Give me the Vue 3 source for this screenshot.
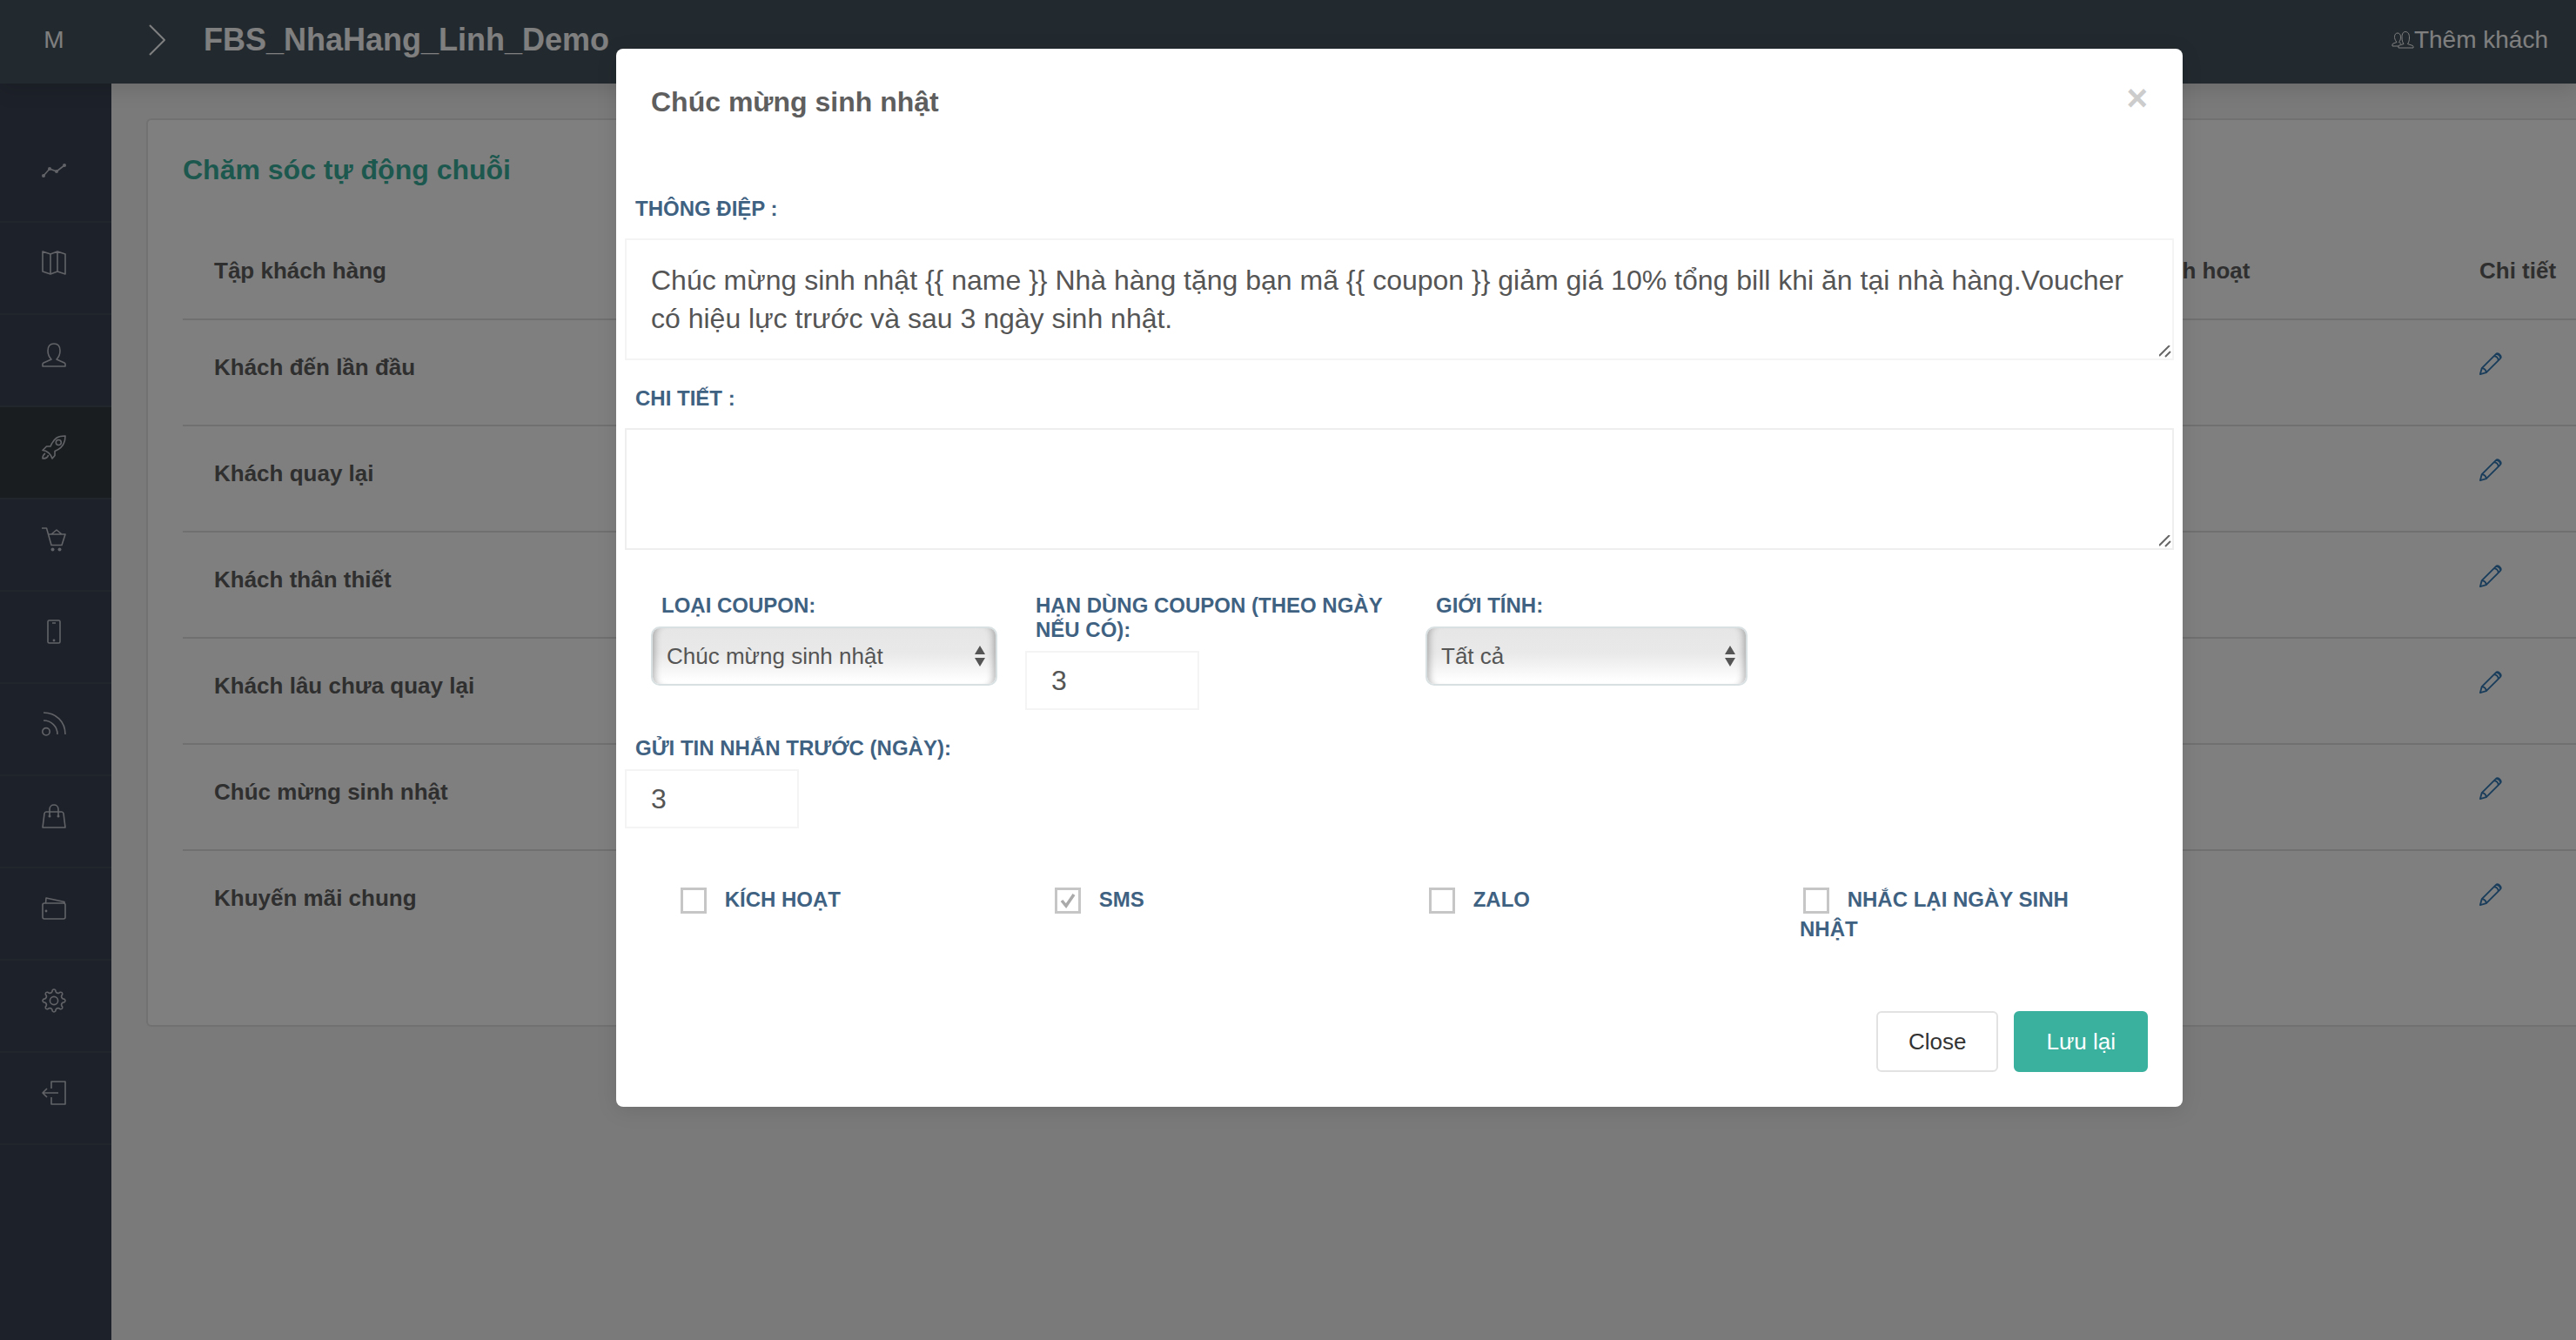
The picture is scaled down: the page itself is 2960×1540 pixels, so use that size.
<script setup>
import { ref } from 'vue'

const gearPath = (() => {
  const point = (radius, degrees) => {
    const a = (degrees * Math.PI) / 180
    return `${(14 + radius * Math.cos(a)).toFixed(2)} ${(14 + radius * Math.sin(a)).toFixed(2)}`
  }
  let d = ''
  for (let i = 0; i < 8; i++) {
    const a = i * 45
    d += `${i ? 'L' : 'M'}${point(12, a - 9)} Q${point(14.2, a)} ${point(12, a + 9)} L${point(10.6, a + 11)} Q${point(8.6, a + 22.5)} ${point(10.6, a + 34)} `
  }
  return d + 'Z'
})()

const navItems = [
  { name: 'Thống kê', d: 'M2 20 9 12 17 15 26 8', dots: [[2, 20], [9, 12], [17, 15], [26, 8]] },
  { name: 'Bản đồ', d: 'M1 1 10 4 18 1 27 4V27L18 24 10 27 1 24ZM10 4V27M18 1V24' },
  { name: 'Khách hàng', d: 'M1 27V24.5Q1 23.5 2 23L11 19C8 16 7 13 7 9C7 4 9.5 1 14 1C18.5 1 21 4 21 9C21 13 20 16 17 19L26 23Q27 23.5 27 24.5V27Z' },
  { name: 'Chăm sóc', active: true, d: 'M27 1C19 1 14 3 10 13H5.5L1 17.5C6 17.5 10.5 22 12 27L15 23.5V18.5C24 15 27 9 27 1ZM22.3 8.5A3 3 0 1 1 16.3 8.5A3 3 0 1 1 22.3 8.5M4 21C1.5 22.5 1 24 1 27C4.5 27 7 26 7.5 23' },
  { name: 'Giỏ hàng', d: 'M0 1H5.5L11 20.5H23L27 8H8M11 8L17 3 23 8', dots: [[12.5, 25.5], [20.5, 25.5]] },
  { name: 'Di động', d: 'M8.500 1H19.5Q21 1 21 2.500V25.5Q21 27 19.5 27H8.500Q7 27 7 25.5V2.500Q7 1 8.500 1ZM12 4H16', dots: [[14, 24]], dotSize: 1.4 },
  { name: 'Tin tức', d: 'M2 1C16 1 27 11 27 26M2 10C11 10 18 17 18 26M9.200 22.800A4.200 4.200 0 1 1 .8 22.800A4.200 4.200 0 1 1 9.200 22.800' },
  { name: 'Cửa hàng', d: 'M3 11Q3.500 9 5 9H23Q24.500 9 25 11L27 27H1ZM9 14V6C9-.7 19-.7 19 6V14', dots: [[9, 14], [19, 14]], dotSize: 1.5 },
  { name: 'Ví', d: 'M3 8H25Q27 8 27 10V24Q27 26 25 26H3Q1 26 1 24V10Q1 8 3 8ZM4.500 8 5 2 26 6.500V8', dots: [[5, 17]], dotSize: 1.4 },
  { name: 'Cài đặt', d: gearPath + 'M18.600 14A4.600 4.600 0 1 1 9.400 14A4.600 4.600 0 1 1 18.600 14' },
  { name: 'Đăng xuất', d: 'M11 9V1H27V27H11V19M19 14H1M6 9 1 14 6 19' },
]

const segments = [
  'Khách đến lần đầu',
  'Khách quay lại',
  'Khách thân thiết',
  'Khách lâu chưa quay lại',
  'Chúc mừng sinh nhật',
  'Khuyến mãi chung',
]

const message = ref(
  'Chúc mừng sinh nhật {{ name }} Nhà hàng tặng bạn mã {{ coupon }} giảm giá 10% tổng bill khi ăn tại nhà hàng.Voucher có hiệu lực trước và sau 3 ngày sinh nhật.'
)
const detail = ref('')
const couponType = ref('Chúc mừng sinh nhật')
const expiry = ref('3')
const gender = ref('Tất cả')
const sendBefore = ref('3')
const options = ref([
  { label: 'KÍCH HOẠT', checked: false },
  { label: 'SMS', checked: true },
  { label: 'ZALO', checked: false },
  { label: 'NHẮC LẠI NGÀY SINH NHẬT', checked: false },
])
</script>

<template>
  <div class="page">
    <header class="topbar">
      <span class="logo">M</span>
      <button class="toggle" type="button" aria-label="Mở menu">
        <svg width="20" height="36" viewBox="0 0 20 36"><path d="M1 1 18 18 1 35" /></svg>
      </button>
      <span class="brand">FBS_NhaHang_Linh_Demo</span>
      <a class="add-guest" href="#">
        <svg width="26" height="22" viewBox="0 0 26 22">
          <path d="M8 20V18Q8 17.500 9 17L14 15.500C12.500 13.500 12 11 12 8 12 3.500 13.500 1.500 16 1.500S20.500 3.500 20.500 8C20.500 11 20 13.500 18.500 15.500L24.500 17.500Q25 18 25 18.500V20ZM8 18H1V16Q1 15.500 2 15L6 13.500C4 11 3.500 9 3.500 7.500 3.500 4.500 5 3 7 3S10.500 4.500 10.500 7.500C10.500 10 10 12 8.500 13.500L11 15" />
        </svg>Thêm khách</a>
    </header>

    <div class="shell">
      <nav class="sidebar">
        <a
          v-for="item in navItems"
          :key="item.name"
          href="#"
          class="nav-item"
          :class="{ active: item.active }"
          :aria-label="item.name"
        >
          <svg width="28" height="28" viewBox="0 0 28 28">
            <path :d="item.d" />
            <circle v-for="(dot, i) in item.dots" :key="i" :cx="dot[0]" :cy="dot[1]" :r="item.dotSize || 2" />
          </svg>
        </a>
      </nav>

      <main class="content">
        <section class="card">
          <h1 class="card-title">Chăm sóc tự động chuỗi</h1>
          <table class="segments">
            <thead>
              <tr>
                <th>Tập khách hàng</th>
                <th class="col-active">Kích hoạt</th>
                <th class="col-detail">Chi tiết</th>
              </tr>
            </thead>
            <tbody>
              <tr v-for="segment in segments" :key="segment">
                <td>{{ segment }}</td>
                <td></td>
                <td>
                  <a class="edit" href="#" :aria-label="'Sửa ' + segment">
                    <svg width="26" height="26" viewBox="0 0 28 28">
                      <path d="M1 27 3 19.500 20 2.500Q22.500 0 25.200 2.800 28 5.500 25.500 8L8.500 25ZM3 19.500Q8 20 8.500 25M18 4.500Q23 5 23.500 10M21 2Q25.500 2.500 26 7" />
                    </svg>
                  </a>
                </td>
              </tr>
            </tbody>
          </table>
        </section>
      </main>
    </div>

    <div class="overlay">
      <form class="modal" role="dialog" aria-labelledby="modal-title" @submit.prevent>
        <div class="modal-header">
          <h2 id="modal-title">Chúc mừng sinh nhật</h2>
          <button class="dismiss" type="button" aria-label="Đóng">×</button>
        </div>

        <div class="modal-body">
          <div class="field">
            <label class="area-label" for="message">THÔNG ĐIỆP :</label>
            <textarea id="message" v-model="message" spellcheck="false"></textarea>
          </div>
          <div class="field">
            <label class="area-label" for="detail">CHI TIẾT :</label>
            <textarea id="detail" v-model="detail" class="plain"></textarea>
          </div>

          <div class="columns coupon-row">
            <div>
              <label for="coupon-type">LOẠI COUPON:</label>
              <select id="coupon-type" v-model="couponType" class="coupon-select">
                <option>Chúc mừng sinh nhật</option>
              </select>
            </div>
            <div>
              <label for="expiry">HẠN DÙNG COUPON (THEO NGÀY NẾU CÓ):</label>
              <input id="expiry" v-model="expiry" type="text" />
            </div>
            <div class="inset">
              <label for="gender">GIỚI TÍNH:</label>
              <select id="gender" v-model="gender">
                <option>Tất cả</option>
              </select>
            </div>
          </div>

          <div class="field">
            <label for="send-before">GỬI TIN NHẮN TRƯỚC (NGÀY):</label>
            <input id="send-before" v-model="sendBefore" type="text" />
          </div>

          <div class="columns option-row">
            <div v-for="option in options" :key="option.label" class="inset">
              <label class="check"><input v-model="option.checked" type="checkbox" /> {{ option.label }}</label>
            </div>
          </div>
        </div>

        <div class="modal-footer">
          <button class="btn" type="button">Close</button>
          <button class="btn primary" type="submit">Lưu lại</button>
        </div>
      </form>
    </div>
  </div>
</template>

<style>
body {
  margin: 0;
  background: #f4f4f4;
}
</style>

<style scoped>
.page,
.page * {
  box-sizing: border-box;
}

.page {
  position: relative;
  display: flex;
  flex-direction: column;
  min-height: 100vh;
  overflow: hidden;
  color: #5e5e5e;
  font-family: "Liberation Sans", Arial, sans-serif;
  font-size: 26px;
  line-height: 28px;
}

svg {
  display: block;
  fill: none;
  stroke: currentColor;
  stroke-width: 2;
  stroke-linejoin: round;
}

.page button,
.page input,
.page select,
.page textarea {
  margin: 0;
  font-family: inherit;
}

.topbar {
  position: relative;
  z-index: 1;
  display: flex;
  align-items: center;
  height: 96px;
  padding: 0 32px 4px 0;
  background: #46545f;
  box-shadow: 0 4px 24px rgba(0, 0, 0, 0.15);
  color: #fff;
}

.logo {
  width: 128px;
  padding-right: 4px;
  font-size: 28px;
  text-align: center;
}

.toggle {
  width: 106px;
  padding: 0 0 0 43px;
  border: 0;
  background: none;
  color: inherit;
}

.brand {
  font-size: 36px;
  font-weight: bold;
}

.add-guest {
  display: flex;
  align-items: center;
  margin-left: auto;
  color: inherit;
  font-size: 28px;
  text-decoration: none;
}

.add-guest svg {
  stroke-width: 1;
}

.shell {
  display: flex;
  flex: 1;
}

.sidebar {
  width: 128px;
  padding-top: 54px;
  background: #3a4252;
}

.nav-item {
  display: flex;
  height: 106px;
  padding: 32px 48px;
  border-bottom: 2px solid #424b58;
  color: #c3c7d0;
}

.nav-item svg {
  overflow: visible;
  stroke-width: 1.6;
}

.nav-item.active {
  background: #343a3f;
}

.nav-item circle {
  fill: currentColor;
  stroke: none;
}

.content {
  flex: 1;
  padding: 40px 0 0 40px;
}

.card {
  padding: 38px 0 78px 40px;
  border: 2px solid #e2e2e2;
  border-right: 0;
  border-radius: 6px 0 0 6px;
  background: #fff;
}

.card-title {
  margin: 0;
  color: #3ab09e;
  font-size: 32px;
  line-height: 38px;
}

.segments {
  width: 100%;
  margin-top: 83px;
  border-collapse: separate;
  border-spacing: 0;
  table-layout: fixed;
}

.segments th,
.segments td {
  border-bottom: 2px solid #e0e0e0;
  font-weight: bold;
  text-align: left;
  vertical-align: top;
}

.segments th {
  padding: 0 0 41px 36px;
}

.segments td {
  height: 122px;
  padding: 40px 0 0 36px;
}

.segments tr:last-child td {
  border-bottom-color: transparent;
}

.segments thead th {
  border-bottom-color: #e0e0e0;
}

.col-active {
  width: 382px;
}

.col-detail {
  width: 147px;
}

.edit {
  display: block;
  margin-top: -3px;
  color: #337ab7;
}

.overlay {
  position: absolute;
  inset: 0;
  z-index: 2;
  padding: 56px 452px 0 708px;
  background: rgba(0, 0, 0, 0.5);
}

.modal {
  border-radius: 8px;
  background: #fff;
  box-shadow: 0 4px 24px rgba(0, 0, 0, 0.1);
}

.modal-header {
  display: flex;
  justify-content: space-between;
  align-items: flex-start;
  padding: 40px;
}

.modal-header h2 {
  margin: 0;
  font-size: 32px;
  line-height: 42px;
}

.dismiss {
  padding: 0;
  border: 0;
  background: none;
  color: #ccc;
  font-size: 42px;
  font-weight: bold;
  line-height: 34px;
}

.modal-body {
  display: flex;
  flex-direction: column;
  gap: 30px;
  padding: 48px 10px 0;
}

label {
  display: block;
  padding-left: 12px;
  margin-bottom: 10px;
  color: #3f6282;
  font-size: 24px;
  font-weight: bold;
}

.area-label {
  margin-bottom: 20px;
}

textarea {
  display: block;
  width: 100%;
  height: 140px;
  padding: 24px 28px;
  border: 2px solid #f4f4f4;
  border-radius: 0;
  outline: 0;
  background: #fff;
  color: #555;
  font-size: 32px;
  line-height: 44px;
  resize: both;
}

textarea.plain {
  border-color: #eee;
}

textarea::-webkit-scrollbar {
  width: 18px;
  height: 18px;
}

textarea::-webkit-resizer {
  background: url("data:image/svg+xml,%3Csvg xmlns='http://www.w3.org/2000/svg' width='18' height='18'%3E%3Cpath d='M3 15 15 3M10 16 16 10' stroke='%23666' stroke-width='2'/%3E%3C/svg%3E") no-repeat right bottom;
}

input[type="text"] {
  display: block;
  width: 200px;
  height: 68px;
  padding: 0 28px;
  border: 2px solid #f4f4f4;
  background: #fff;
  color: #555;
  font-size: 32px;
}

select {
  display: block;
  width: 100%;
  height: 68px;
  padding: 0 16px;
  border: 2px solid #d9e0e2;
  border-radius: 10px;
  appearance: none;
  background:
    url("data:image/svg+xml,%3Csvg xmlns='http://www.w3.org/2000/svg' width='12' height='24'%3E%3Cpath d='M0 10 6 0 12 10ZM0 14 6 24 12 14Z' fill='%23555'/%3E%3C/svg%3E") no-repeat right 12px center,
    linear-gradient(#e6e6e6, #e9e9e9 45%, #fff 95%);
  box-shadow: inset 10px 0 8px -8px rgba(0, 0, 0, 0.3), inset -10px 0 8px -8px rgba(0, 0, 0, 0.3);
  color: #555;
  font-size: 26px;
}

.coupon-select {
  width: 398px;
}

.columns {
  display: grid;
  grid-template-columns: repeat(4, 1fr);
  margin: 0 30px;
}

.inset {
  padding: 0 30px;
}

.coupon-row {
  margin-top: 20px;
}

.option-row {
  margin-top: 35px;
}

label.check {
  margin: 0;
  padding: 0;
  line-height: 34px;
}

.page .check input {
  width: 30px;
  height: 30px;
  margin: 0 14px 0 4px;
  border: 3px solid #c6c6c6;
  appearance: none;
  vertical-align: -8px;
}

.check input:checked {
  background: url("data:image/svg+xml,%3Csvg xmlns='http://www.w3.org/2000/svg' width='18' height='18'%3E%3Cpath d='M2 9 7 15 16 2' fill='none' stroke='%23aaa' stroke-width='3.500'/%3E%3C/svg%3E") no-repeat center;
}

.modal-footer {
  display: flex;
  justify-content: flex-end;
  gap: 18px;
  padding: 77px 40px 40px;
}

.btn {
  height: 70px;
  padding: 0 35px;
  border: 2px solid #e2e2e2;
  border-radius: 6px;
  background: #fff;
  color: #333;
  font-size: 26px;
}

.btn.primary {
  border-color: #3ab09e;
  background: #3ab09e;
  color: #fff;
}
</style>
